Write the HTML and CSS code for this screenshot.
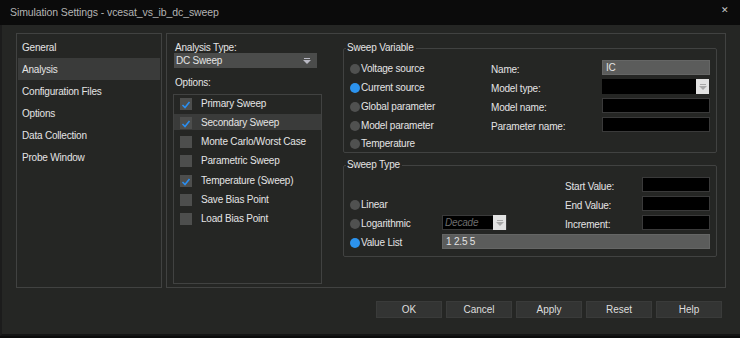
FILE: index.html
```html
<!DOCTYPE html>
<html lang="en">
<head>
    <meta charset="UTF-8">
    <meta name="viewport" content="width=device-width, initial-scale=1.0">
    <link rel="stylesheet" href="styles.css">
</head>
<body>
<div class="window">
    <div class="titlebar">
        <span class="title">Simulation Settings - vcesat_vs_ib_dc_sweep</span>
        <span class="close">&#x2715;</span>
    </div>
    <div class="dialog">
        <div class="content">
            <!-- Category list -->
            <ul class="nav">
                <li>General</li>
                <li class="active">Analysis</li>
                <li>Configuration Files</li>
                <li>Options</li>
                <li>Data Collection</li>
                <li>Probe Window</li>
            </ul>

            <div class="panel">
                <div class="left-col">
                    <div class="field-label">Analysis Type:</div>
                    <div class="combo">
                        <span>DC Sweep</span>
                        <svg class="combo-arrow" width="8" height="6" viewBox="0 0 8 6"><rect x="1" y="0" width="6" height="1" fill="#b9b9c4"/><path d="M0 2 H8 L4 6 Z" fill="#b9b9c4"/></svg>
                    </div>
                    <div class="field-label options-label">Options:</div>
                    <div class="option-list">
                        <div class="option"><span class="check"><svg width="12" height="12" viewBox="0 0 12 12"><path d="M2.5 7 L5 9.5 L9.5 4" fill="none" stroke="#2a8ef0" stroke-width="1.6"/></svg></span>Primary Sweep</div>
                        <div class="option selected"><span class="check"><svg width="12" height="12" viewBox="0 0 12 12"><path d="M2.5 7 L5 9.5 L9.5 4" fill="none" stroke="#2a8ef0" stroke-width="1.6"/></svg></span>Secondary Sweep</div>
                        <div class="option"><span class="check"></span>Monte Carlo/Worst Case</div>
                        <div class="option"><span class="check"></span>Parametric Sweep</div>
                        <div class="option"><span class="check"><svg width="12" height="12" viewBox="0 0 12 12"><path d="M2.5 7 L5 9.5 L9.5 4" fill="none" stroke="#2a8ef0" stroke-width="1.6"/></svg></span>Temperature (Sweep)</div>
                        <div class="option"><span class="check"></span>Save Bias Point</div>
                        <div class="option"><span class="check"></span>Load Bias Point</div>
                    </div>
                </div>

                <div class="right-col">
                    <fieldset class="group">
                        <legend>Sweep Variable</legend>
                        <div class="var-grid">
                            <div class="radio"><span class="dot"></span>Voltage source</div>
                            <div class="lbl">Name:</div>
                            <div class="input grey">IC</div>

                            <div class="radio"><span class="dot on"></span>Current source</div>
                            <div class="lbl">Model type:</div>
                            <div class="input black select">
                                <span class="sel-btn"><svg width="8" height="6" viewBox="0 0 8 6"><rect x="1" y="0" width="6" height="1" fill="#a8a8a8"/><path d="M0 2 H8 L4 6 Z" fill="#a8a8a8"/></svg></span>
                            </div>

                            <div class="radio"><span class="dot"></span>Global parameter</div>
                            <div class="lbl">Model name:</div>
                            <div class="input black"></div>

                            <div class="radio"><span class="dot"></span>Model parameter</div>
                            <div class="lbl">Parameter name:</div>
                            <div class="input black"></div>

                            <div class="radio"><span class="dot"></span>Temperature</div>
                        </div>
                    </fieldset>

                    <fieldset class="group">
                        <legend>Sweep Type</legend>
                        <div class="type-grid">
                            <div></div>
                            <div></div>
                            <div class="lbl">Start Value:</div>
                            <div class="input black"></div>

                            <div class="radio"><span class="dot"></span>Linear</div>
                            <div></div>
                            <div class="lbl">End Value:</div>
                            <div class="input black"></div>

                            <div class="radio"><span class="dot"></span>Logarithmic</div>
                            <div class="input black select decade">
                                <span class="placeholder">Decade</span>
                                <span class="sel-btn"><svg width="8" height="6" viewBox="0 0 8 6"><rect x="1" y="0" width="6" height="1" fill="#a8a8a8"/><path d="M0 2 H8 L4 6 Z" fill="#a8a8a8"/></svg></span>
                            </div>
                            <div class="lbl">Increment:</div>
                            <div class="input black"></div>

                            <div class="radio"><span class="dot on"></span>Value List</div>
                            <div class="input grey value-list">1 2.5 5</div>
                        </div>
                    </fieldset>
                </div>
            </div>
        </div>

        <div class="buttons">
            <button class="btn">OK</button>
            <button class="btn">Cancel</button>
            <button class="btn">Apply</button>
            <button class="btn">Reset</button>
            <button class="btn">Help</button>
        </div>
    </div>
</div>
</body>
</html>
```

FILE: styles.css
```css
body {
    margin: 0;
    background: #0b0b0b;
    font-family: "Liberation Sans", Arial, sans-serif;
    font-size: 10px;
    letter-spacing: -0.2px;
    color: #e4e4e4;
}
.window {
    width: 740px;
    height: 338px;
    display: flex;
    flex-direction: column;
}
.titlebar {
    height: 25px;
    flex: none;
    display: flex;
    align-items: center;
    justify-content: space-between;
    padding: 0 11px 2px 10px;
    box-sizing: border-box;
    background: #0b0b0b;
}
.title {
    color: #b4b4b4;
    font-size: 10.5px;
    letter-spacing: -0.1px;
}
.close {
    color: #c8c8c8;
    font-size: 9px;
    margin-top: -4px;
}
.dialog {
    height: 311px;
    flex: none;
    background: #252624;
    border-left: 2px solid #1c1c1c;
    border-bottom: 2px solid #141414;
    padding: 8px 0 0 14px;
    box-sizing: border-box;
}
.content {
    display: flex;
    gap: 4px;
    height: 255px;
}

/* Category list */
.nav {
    list-style: none;
    margin: 0;
    padding: 2px 1px;
    width: 146px;
    box-sizing: border-box;
    border: 1px solid #414241;
}
.nav li {
    height: 22px;
    line-height: 23px;
    padding-left: 4px;
}
.nav li.active {
    background: #3a3b3a;
}

.panel {
    width: 560px;
    box-sizing: border-box;
    border: 1px solid #414241;
    display: flex;
    gap: 21px;
    padding: 0 8px 0 6px;
}
.left-col {
    width: 149px;
    padding-top: 9px;
}
.field-label {
    line-height: 10px;
    padding-left: 2px;
}
.options-label {
    line-height: 14px;
    margin-top: 8px;
}
.combo {
    margin-left: 1px;
    width: 143px;
    height: 15px;
    background: #4b4c4b;
    display: flex;
    align-items: center;
    justify-content: space-between;
    padding: 0 6px 0 2px;
    box-sizing: border-box;
}
.combo-arrow {
    margin-top: 1px;
}
.option-list {
    margin-top: 4px;
    height: 190px;
    border: 1px solid #414241;
    box-sizing: border-box;
    display: flex;
    flex-direction: column;
    gap: 3.3px;
}
.option {
    height: 16px;
    display: flex;
    align-items: center;
    padding-left: 6px;
}
.option.selected {
    background: #3a3b3a;
}
.check {
    flex: none;
    width: 12px;
    height: 12px;
    background: #4d4e4d;
    margin-right: 9px;
    margin-top: 1px;
    display: flex;
}

.right-col {
    width: 374px;
    padding-top: 7px;
}
.group {
    margin: 0;
    padding: 0;
    border: 1px solid #414241;
    border-radius: 2px;
}
.group + .group {
    margin-top: 5px;
}
.group legend {
    margin-left: 2px;
    padding: 0 2px 0 1px;
    line-height: 14px;
}
.var-grid {
    display: grid;
    grid-template-columns: 141px 111px 108px;
    grid-template-rows: 19px 19px 19px 19px 17px;
    align-items: center;
    padding: 4px 5px 0 6px;
}
.type-grid {
    display: grid;
    grid-template-columns: 92px 123px 77px 68px;
    grid-auto-rows: 19px;
    align-items: center;
    padding: 4px 5px 4px 6px;
}
.radio {
    display: flex;
    align-items: center;
}
.dot {
    flex: none;
    width: 10px;
    height: 10px;
    border-radius: 50%;
    background: #505150;
    margin-right: 1px;
}
.dot.on {
    background: #2c93ee;
}
.lbl {
    padding-top: 1px;
}
.input {
    height: 15px;
    line-height: 15px;
    box-sizing: border-box;
    padding-left: 3px;
    margin-top: -2px;
}
.input.grey {
    background: #5b5c5b;
    border: 1px solid #656665;
    line-height: 13px;
}
.input.black {
    background: #000;
    border: 1px solid #3a3a3a;
}
.select {
    display: flex;
    padding: 0;
    border-right: none;
}
.sel-btn {
    margin-left: auto;
    width: 13px;
    height: 15px;
    margin-top: -1px;
    background: #e2e2e2;
    display: flex;
    align-items: center;
    justify-content: center;
}
.var-grid .select {
    width: 107px;
    border: none;
}
.var-grid .select .sel-btn {
    margin-top: 0;
}
.decade {
    width: 65px;
}
.placeholder {
    color: #6d6d6d;
    font-style: italic;
    padding-left: 2px;
    line-height: 13px;
}
.value-list {
    grid-column: 2 / 5;
}

.buttons {
    display: flex;
    justify-content: flex-end;
    gap: 4px;
    margin-top: 13px;
    padding-right: 18px;
}
.btn {
    width: 66px;
    height: 17px;
    background: #333433;
    border: 1px solid #3a3b3a;
    color: #dedede;
    font-family: "Liberation Sans", Arial, sans-serif;
    font-size: 10px;
    padding: 0;
}
```
